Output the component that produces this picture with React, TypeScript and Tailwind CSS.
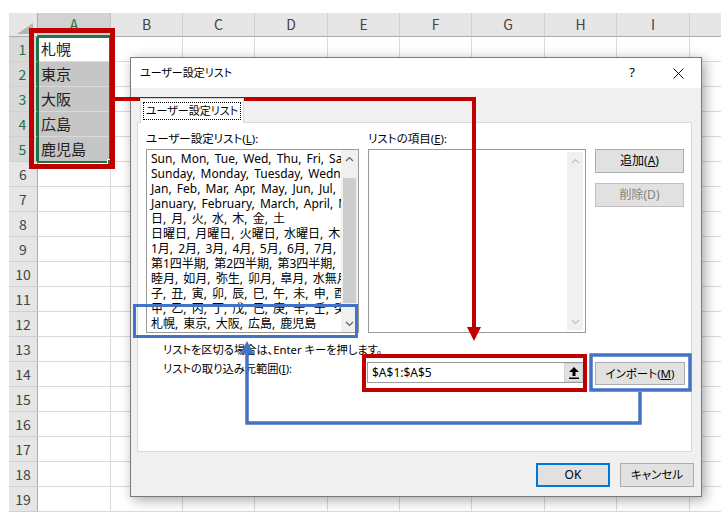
import React from "react";

const JP = "font-['Noto_Sans_CJK_JP',sans-serif]";
const UI = "font-['Noto_Sans','Noto_Sans_CJK_JP',sans-serif]";

const COLS = [
  { l: "A", w: "w-[73px]" },
  { l: "B", w: "w-[72px]" },
  { l: "C", w: "w-[72px]" },
  { l: "D", w: "w-[73px]" },
  { l: "E", w: "w-[72px]" },
  { l: "F", w: "w-[72px]" },
  { l: "G", w: "w-[73px]" },
  { l: "H", w: "w-[72px]" },
  { l: "I", w: "w-[73px]" },
  { l: "J", w: "w-[72px]" },
];

const CITIES = ["札幌", "東京", "大阪", "広島", "鹿児島"];

const USER_LISTS = [
  "Sun, Mon, Tue, Wed, Thu, Fri, Sat",
  "Sunday, Monday, Tuesday, Wednesday, Thursday, Friday, Saturday",
  "Jan, Feb, Mar, Apr, May, Jun, Jul, Aug, Sep, Oct, Nov, Dec",
  "January, February, March, April, May, June, July, August",
  "日, 月, 火, 水, 木, 金, 土",
  "日曜日, 月曜日, 火曜日, 水曜日, 木曜日, 金曜日, 土曜日",
  "1月, 2月, 3月, 4月, 5月, 6月, 7月, 8月, 9月, 10月, 11月, 12月",
  "第1四半期, 第2四半期, 第3四半期, 第4四半期",
  "睦月, 如月, 弥生, 卯月, 皐月, 水無月, 文月, 葉月, 長月",
  "子, 丑, 寅, 卯, 辰, 巳, 午, 未, 申, 酉, 戌, 亥",
  "甲, 乙, 丙, 丁, 戊, 己, 庚, 辛, 壬, 癸",
  "札幌, 東京, 大阪, 広島, 鹿児島",
];

function Chevron({ up, color = "#606060" }: { up?: boolean; color?: string }) {
  return (
    <svg width="9" height="6" viewBox="0 0 9 6">
      <polyline
        points={up ? "1,5 4.5,1.5 8,5" : "1,1 4.5,4.5 8,1"}
        fill="none"
        stroke={color}
        strokeWidth="1.2"
      />
    </svg>
  );
}

function Sheet() {
  return (
    <div className="flex flex-col">
      <div className="h-[13px]" />
      {/* column headers */}
      <div className="flex h-[24px]">
        <div className="w-[9px] shrink-0" />
        <div className="w-[29px] shrink-0 bg-[#e6e6e6] border-r border-b border-[#ababab] flex items-end justify-end pr-[4px] pb-[2px]">
          <svg width="16" height="11" viewBox="0 0 16 11">
            <polygon points="16,0 16,11 0,11" fill="#b4b4b4" />
          </svg>
        </div>
        {COLS.map((c) => (
          <div
            key={c.l}
            className={`${c.w} shrink-0 flex items-center justify-center text-[14px] ${
              c.l === "A"
                ? "bg-[#d2d2d2] text-[#217346] border-b-2 border-b-[#217346] border-r border-r-[#c4c4c4]"
                : "bg-[#e6e6e6] text-[#444] border-b border-b-[#ababab] border-r border-r-[#d0d0d0]"
            }`}
          >
            {c.l}
          </div>
        ))}
      </div>
      {/* rows */}
      {Array.from({ length: 19 }, (_, i) => i + 1).map((r) => (
        <div key={r} className="flex h-[25px]">
          <div className="w-[9px] shrink-0" />
          <div
            className={`w-[29px] shrink-0 flex items-center justify-center text-[14px] border-b border-b-[#d0d0d0] ${
              r <= 5
                ? "bg-[#d9d9d9] text-[#217346] border-r-2 border-r-[#217346]"
                : "bg-[#e6e6e6] text-[#444] border-r border-r-[#ababab]"
            }`}
          >
            {r}
          </div>
          {COLS.map((c) => (
            <div
              key={c.l}
              className={`${c.w} shrink-0 border-r border-b border-[#dadada] flex items-center pl-[3px] text-[15px] text-[#222] ${
                c.l === "A" && r >= 2 && r <= 5 ? "bg-[#c6c6c6]" : ""
              }`}
            >
              {c.l === "A" && r <= 5 ? CITIES[r - 1] : ""}
            </div>
          ))}
        </div>
      ))}
    </div>
  );
}

function Btn({
  children,
  className = "",
  disabled,
  focused,
}: {
  children: React.ReactNode;
  className?: string;
  disabled?: boolean;
  focused?: boolean;
}) {
  return (
    <div
      className={`flex items-center justify-center bg-[#e1e1e1] whitespace-nowrap ${
        focused ? "border-2 border-[#0078d7]" : disabled ? "border border-[#bfbfbf]" : "border border-[#adadad]"
      } ${disabled ? "text-[#838383]" : "text-black"} ${className}`}
    >
      {children}
    </div>
  );
}

function Dialog() {
  return (
    <div
      className={`absolute left-[130px] top-[57px] w-[572px] h-[440px] border border-[#7a7a7a] bg-[#f0f0f0] shadow-[3px_3px_12px_rgba(0,0,0,0.35)] flex flex-col text-[11.5px] text-black [font-feature-settings:'palt'] ${UI}`}
    >
      {/* title bar */}
      <div className="h-[30px] bg-white flex items-center shrink-0">
        <span className="pl-[9px] flex-1 text-[11px]">ユーザー設定リスト</span>
        <div className="w-[46px] h-full flex items-center justify-center text-[13px]">?</div>
        <div className="w-[46px] h-full flex items-center justify-center">
          <svg width="11" height="11" viewBox="0 0 11 11">
            <path d="M0.5 0.5 L10.5 10.5 M10.5 0.5 L0.5 10.5" stroke="#111" strokeWidth="1" />
          </svg>
        </div>
      </div>

      <div className="flex-1 flex flex-col pl-[6px] pt-[10px]">
        {/* tab */}
        <div className="ml-[3px] w-[104px] h-[25px] -mb-px bg-white border border-b-0 border-[#d9d9d9] relative z-10 px-[2px] pt-[3px]">
          <div className="h-[18px] border border-dotted border-black flex items-center justify-center whitespace-nowrap text-[11px]">
            ユーザー設定リスト
          </div>
        </div>
        {/* panel */}
        <div className="w-[555px] h-[330px] bg-white border border-[#d9d9d9] pl-[8px] pt-[8px] flex flex-col">
          <div className="flex">
            {/* left list */}
            <div className="w-[213px] flex flex-col">
              <div className="h-[16px] leading-[16px] mb-[2px] whitespace-nowrap">
                ユーザー設定リスト(<span className="underline">L</span>):
              </div>
              <div className="h-[184px] border border-[#9a9a9a] flex">
                <div className="flex-1 overflow-hidden pl-[4px] pt-[1px] text-[12px] [word-spacing:2px]">
                  {USER_LISTS.map((t) => (
                    <div key={t} className="h-[15px] leading-[15px] whitespace-nowrap">
                      {t}
                    </div>
                  ))}
                </div>
                <div className="w-[17px] bg-[#f0f0f0] flex flex-col">
                  <div className="h-[17px] flex items-center justify-center">
                    <Chevron up />
                  </div>
                  <div className="h-[11px]" />
                  <div className="mx-[2px] h-[125px] bg-[#cdcdcd]" />
                  <div className="flex-1" />
                  <div className="h-[17px] flex items-center justify-center">
                    <Chevron />
                  </div>
                </div>
              </div>
            </div>
            {/* right list */}
            <div className="ml-[9px] w-[218px] flex flex-col">
              <div className="h-[16px] leading-[16px] mb-[2px] whitespace-nowrap">
                リストの項目(<span className="underline">E</span>):
              </div>
              <div className="h-[184px] border border-[#9a9a9a] flex justify-end p-[2px]">
                <div className="w-[16px] bg-[#f0f0f0] flex flex-col justify-between">
                  <div className="h-[17px] flex items-center justify-center">
                    <Chevron up color="#c0c0c0" />
                  </div>
                  <div className="h-[17px] flex items-center justify-center">
                    <Chevron color="#c0c0c0" />
                  </div>
                </div>
              </div>
            </div>
            {/* side buttons */}
            <div className="ml-[9px] w-[89px] pt-[18px] flex flex-col gap-[10px] text-[12px]">
              <Btn className="h-[24px]">
                追加(<span className="underline">A</span>)
              </Btn>
              <Btn className="h-[24px]" disabled>
                削除(D)
              </Btn>
            </div>
          </div>

          <div className="pl-[17px] mt-[10px] h-[14px] leading-[14px] whitespace-nowrap text-[11.25px]">
            リストを区切る場合は、Enter キーを押します。
          </div>
          <div className="pl-[17px] mt-[5px] flex items-start">
            <div className="w-[204px] leading-[14px] whitespace-nowrap text-[11.25px]">
              リストの取り込み元範囲(<span className="underline">I</span>):
            </div>
            <div className="w-[217px] h-[21px] border border-[#9a9a9a] flex text-[12px]">
              <div className="flex-1 pl-[4px] flex items-center leading-none">$A$1:$A$5</div>
              <div className="w-[19px] bg-[#e1e1e1] border border-[#d0d0d0] flex items-center justify-center">
                <svg width="10" height="12" viewBox="0 0 10 12">
                  <polygon points="5,0 10,5 6.5,5 6.5,9 3.5,9 3.5,5 0,5" fill="#000" />
                  <rect x="0" y="10.5" width="10" height="1.5" fill="#000" />
                </svg>
              </div>
            </div>
            <Btn className="ml-[11px] w-[90px] h-[23px] text-[11.5px]">
              インポート(<span className="underline">M</span>)
            </Btn>
          </div>
        </div>

        {/* OK / cancel */}
        <div className="mt-[11px] flex justify-end gap-[10px] pr-[7px] text-[12px]">
          <Btn className="w-[74px] h-[24px]" focused>
            OK
          </Btn>
          <Btn className="w-[74px] h-[24px] text-[11.5px]">キャンセル</Btn>
        </div>
      </div>
    </div>
  );
}

function Annotations() {
  return (
    <svg className="absolute inset-0 pointer-events-none" width="721" height="512" viewBox="0 0 721 512">
      {/* red: source range to import field */}
      <rect x="31.5" y="30.5" width="81" height="136" fill="none" stroke="#c00000" strokeWidth="5" />
      <path d="M115 99 H474 V329" fill="none" stroke="#c00000" strokeWidth="4" />
      <polygon points="467,327 481,327 474,341" fill="#c00000" />
      <rect x="364" y="356" width="221" height="34" fill="none" stroke="#c00000" strokeWidth="4" />
      {/* blue: import button to result */}
      <rect x="134.5" y="305.5" width="222" height="31" fill="none" stroke="#4472c4" strokeWidth="3" />
      <rect x="591" y="355" width="99" height="35" fill="none" stroke="#4472c4" strokeWidth="3.5" />
      <path d="M640 392 V423 H247 V352" fill="none" stroke="#4472c4" strokeWidth="3.5" />
      <polygon points="240,354 254,354 247,341" fill="#4472c4" />
    </svg>
  );
}

export default function App() {
  return (
    <div className={`relative w-[721px] h-[512px] overflow-hidden bg-white ${JP}`}>
      <Sheet />
      {/* active range selection */}
      <div className="absolute left-[37px] top-[36px] w-[74px] h-[127px] border-2 border-[#217346]" />
      <div className="absolute left-[107px] top-[159px] w-[6px] h-[6px] bg-[#217346] border border-white" />
      <Dialog />
      <Annotations />
    </div>
  );
}
